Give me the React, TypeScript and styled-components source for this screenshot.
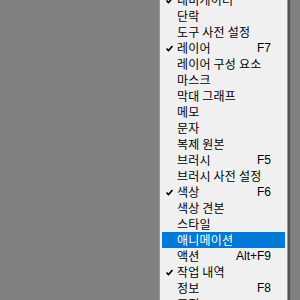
import styled, { createGlobalStyle } from "styled-components";

const GlobalStyle = createGlobalStyle`
  html, body {
    margin: 0;
    padding: 0;
    background: #808080;
  }
`;

const Desktop = styled.div`
  position: relative;
  width: 300px;
  height: 300px;
  overflow: hidden;
  background: #808080;
`;

// popup menu, scrolled so the first row is cut off at the top
const Menu = styled.div`
  position: absolute;
  left: 159px;
  top: -10px;
  width: 129px;
  box-sizing: border-box;
  padding: 1px 0;
  background: #f0f0f0;
  border: 1px solid #979797;
  box-shadow: 2px 2px 1px rgba(0, 0, 0, 0.35);
  font-family: "Noto Sans CJK KR", "Liberation Sans", sans-serif;
  font-size: 12px;
  color: #000000;
`;

const Item = styled.div<{ $active?: boolean }>`
  display: flex;
  align-items: center;
  height: 16px;
  line-height: 16px;
  margin: 0 2px;
  padding-right: 14px;
  background: ${(p) => (p.$active ? "#0078d7" : "transparent")};
  color: ${(p) => (p.$active ? "#ffffff" : "#000000")};
  white-space: nowrap;
`;

const CheckSlot = styled.span`
  width: 15px;
  height: 16px;
  display: flex;
  align-items: center;
  justify-content: center;
  flex: none;
`;

const Label = styled.span`
  flex: 1;
  letter-spacing: 0.2px;
`;

const Shortcut = styled.span`
  font-family: "Liberation Sans", Arial, sans-serif;
  font-size: 12px;
`;

const Check = () => (
  <svg width="7" height="7" viewBox="0 0 7 7">
    <path d="M0.5 3.5 L2.5 5.5 L6.5 1" fill="none" stroke="#000" strokeWidth="1.6" />
  </svg>
);

const items: { label: string; key?: string; checked?: boolean; active?: boolean }[] = [
  { label: "내비게이터", checked: true },
  { label: "단락" },
  { label: "도구 사전 설정" },
  { label: "레이어", key: "F7", checked: true },
  { label: "레이어 구성 요소" },
  { label: "마스크" },
  { label: "막대 그래프" },
  { label: "메모" },
  { label: "문자" },
  { label: "복제 원본" },
  { label: "브러시", key: "F5" },
  { label: "브러시 사전 설정" },
  { label: "색상", key: "F6", checked: true },
  { label: "색상 견본" },
  { label: "스타일" },
  { label: "애니메이션", active: true },
  { label: "액션", key: "Alt+F9" },
  { label: "작업 내역", checked: true },
  { label: "정보", key: "F8" },
  { label: "조정" },
];

const App = () => (
  <>
    <GlobalStyle />
    <Desktop>
      <Menu>
        {items.map((it) => (
          <Item key={it.label} $active={it.active}>
            <CheckSlot>{it.checked && <Check />}</CheckSlot>
            <Label>{it.label}</Label>
            {it.key && <Shortcut>{it.key}</Shortcut>}
          </Item>
        ))}
      </Menu>
    </Desktop>
  </>
);

export default App;
